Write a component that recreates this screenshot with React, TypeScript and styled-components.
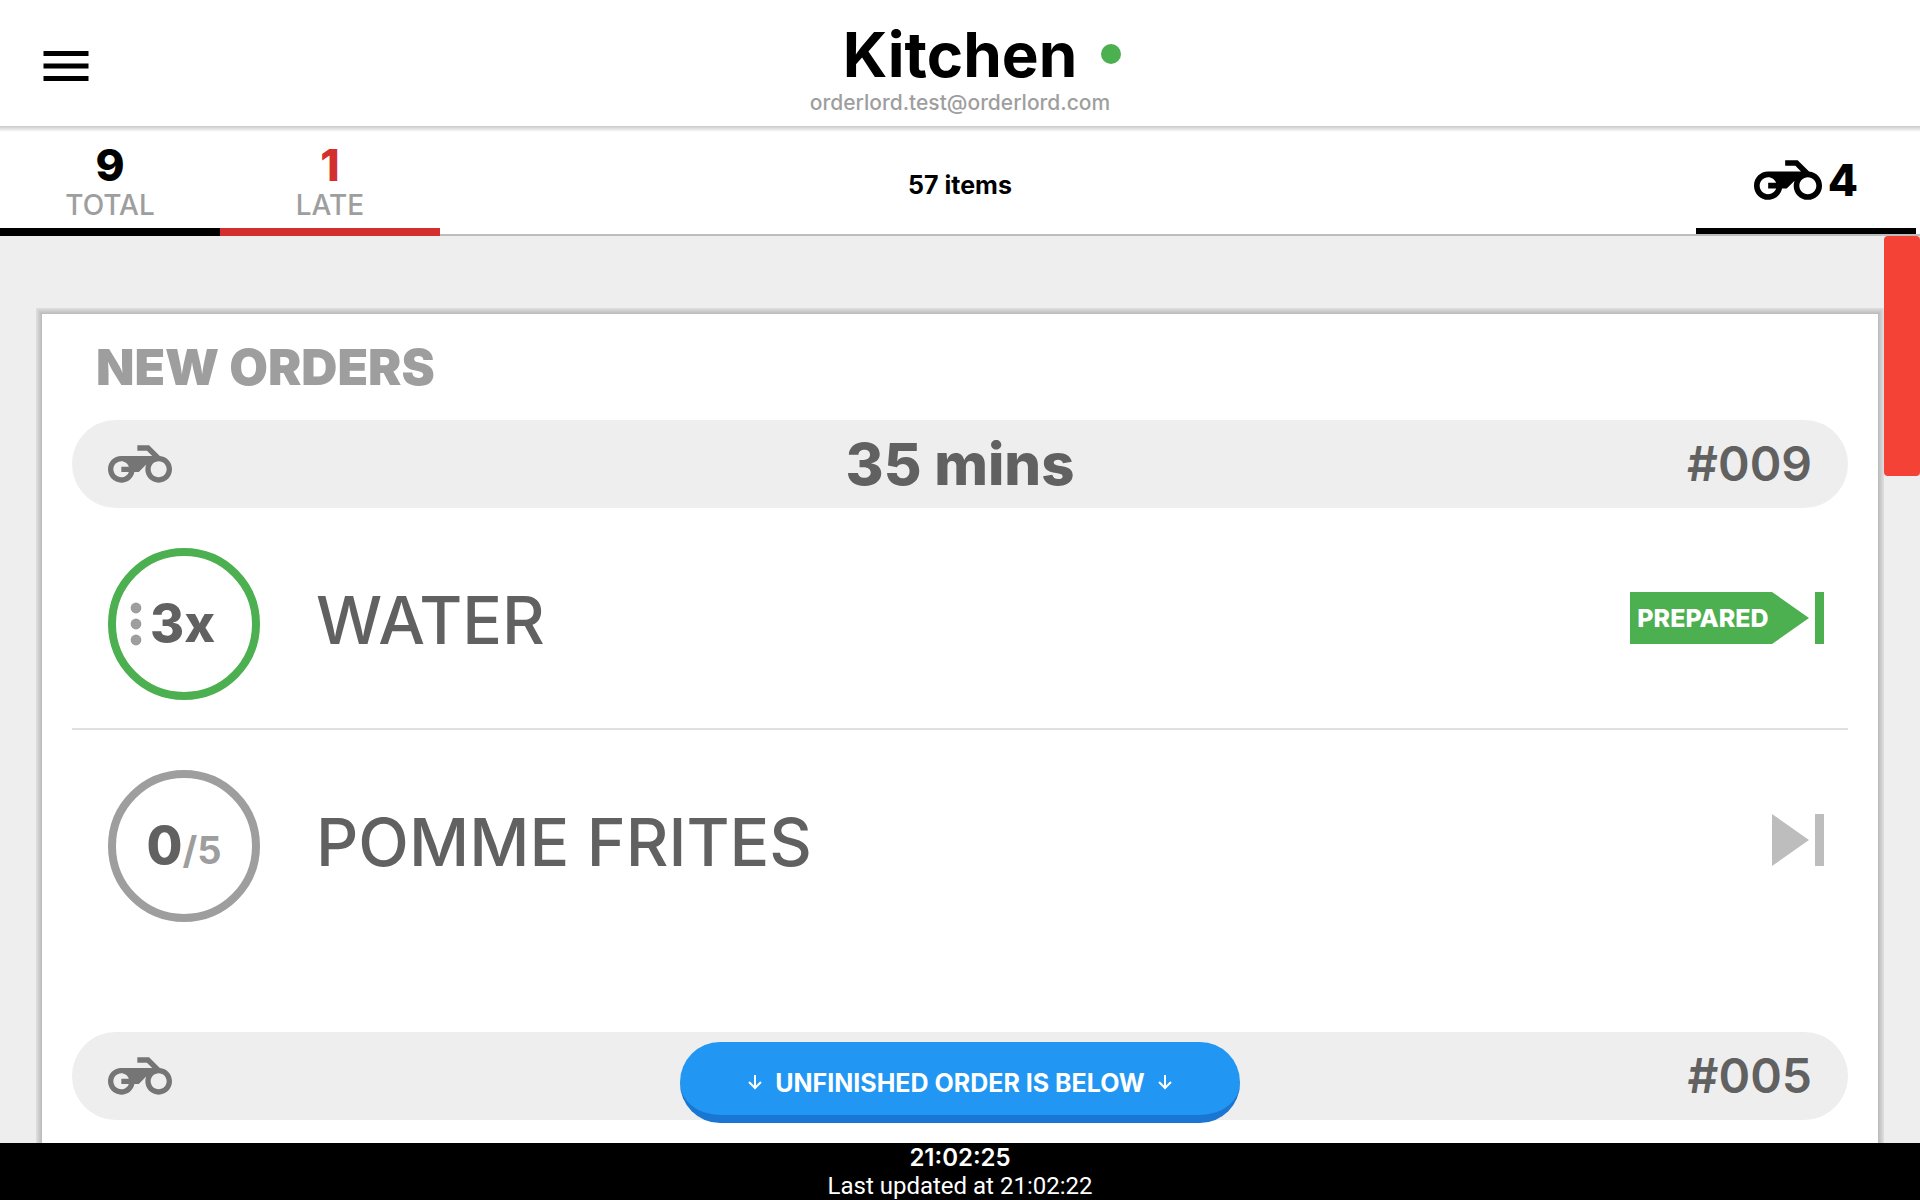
import React from "react";
import styled, { createGlobalStyle } from "styled-components";

const GlobalStyle = createGlobalStyle`
  * { box-sizing: border-box; }
  body { margin: 0; background: #eeeeee; }
  button {
    margin: 0;
    padding: 0;
    border: 0;
    background: none;
    color: inherit;
    font: inherit;
    cursor: pointer;
  }
  svg { display: block; flex: none; }
`;

const Screen = styled.div`
  display: flex;
  flex-direction: column;
  height: 100vh;
  overflow: hidden;
  font-family: Inter, "Liberation Sans", sans-serif;
  color: #000000;
`;

const Header = styled.header`
  display: grid;
  grid-template-columns: 1fr auto 1fr;
  align-items: start;
  padding: 21px 36px 9px;
  background: #ffffff;
`;

const MenuButton = styled.button`
  justify-self: start;
  margin-top: 15px;
`;

const Heading = styled.div`
  text-align: center;
`;

const Title = styled.h1`
  position: relative;
  width: max-content;
  margin: 0 auto;
  font-size: 62px;
  font-weight: 700;
  line-height: 68px;
`;

const OnlineDot = styled.span`
  position: absolute;
  top: 23px;
  left: 100%;
  width: 20px;
  height: 20px;
  margin-left: 24px;
  border-radius: 50%;
  background: #4caf50;
`;

const Account = styled.div`
  font-size: 21px;
  font-weight: 500;
  line-height: 28px;
  color: #9e9e9e;
`;

const Stats = styled.nav`
  display: grid;
  grid-template-columns: 1fr auto 1fr;
  background: linear-gradient(#c8c8c8, #ffffff 6px);
  box-shadow: inset 0 -2px #bdbdbd;
`;

const Tabs = styled.div`
  display: flex;
`;

const Tab = styled.button<{ $accent: string }>`
  width: 220px;
  padding: 17px 0 5px;
  border-bottom: 8px solid ${(p) => p.$accent};
  color: ${(p) => p.$accent};
`;

const TabCount = styled.div`
  font-size: 44px;
  font-weight: 800;
  line-height: 44px;
`;

const TabLabel = styled.div`
  font-size: 28px;
  font-weight: 500;
  line-height: 36px;
  color: #9e9e9e;
`;

const ItemCount = styled.div`
  align-self: center;
  padding-top: 8px;
  font-size: 25px;
  font-weight: 700;
  line-height: 32px;
`;

const DeliveryTab = styled.button`
  display: flex;
  align-items: center;
  justify-content: center;
  justify-self: end;
  gap: 6px;
  width: 220px;
  margin: 0 4px 2px 0;
  padding-top: 6px;
  border-bottom: 6px solid #000000;
  font-size: 44px;
  font-weight: 800;
  line-height: 44px;
`;

const Main = styled.main`
  position: relative;
  flex: 1;
  min-height: 0;
  padding: 78px 42px 0;
  overflow: hidden;
  background: #eeeeee;
`;

const ScrollThumb = styled.div`
  position: absolute;
  top: 0;
  right: 0;
  width: 36px;
  height: 240px;
  border-radius: 4px;
  background: #f44336;
`;

const Card = styled.section`
  min-height: 100%;
  padding: 0 30px 40px;
  background: #ffffff;
  box-shadow:
    0 0 0 1px #bdbdbd,
    0 0 0 2px #c3c3c3,
    0 0 0 3px #c9c9c9,
    0 0 0 4px #cfcfcf,
    0 0 0 5px #d6d6d6,
    0 0 0 6px #dddddd;
`;

const CardTitle = styled.h2`
  margin: 0;
  padding-left: 24px;
  font-size: 50px;
  font-weight: 900;
  line-height: 106px;
  color: #9e9e9e;
`;

const Order = styled.article`
  margin-bottom: 80px;
  color: #616161;
`;

const OrderBar = styled.header`
  display: grid;
  grid-template-columns: 1fr auto 1fr;
  align-items: center;
  height: 88px;
  padding: 0 36px;
  border-radius: 44px;
  background: #eeeeee;
`;

const OrderTime = styled.div`
  font-size: 58px;
  font-weight: 800;
  line-height: 88px;
`;

const OrderNumber = styled.div`
  justify-self: end;
  font-size: 48px;
  font-weight: 600;
  line-height: 88px;
`;

const Items = styled.ul`
  margin: 0;
  padding: 0;
  list-style: none;
`;

const Item = styled.li`
  display: flex;
  align-items: flex-start;
  padding: 40px 24px 28px 36px;
  border-bottom: 2px solid #e0e0e0;

  &:last-child {
    border-color: transparent;
  }
`;

const Quantity = styled.button<{ $done: boolean }>`
  display: flex;
  flex: none;
  align-items: center;
  justify-content: ${(p) => (p.$done ? "flex-start" : "center")};
  gap: 8px;
  width: 152px;
  height: 152px;
  padding: ${(p) => (p.$done ? "0 0 0 14px" : "0")};
  border: 8px solid ${(p) => (p.$done ? "#4caf50" : "#9e9e9e")};
  border-radius: 50%;
  font-size: 52px;
  font-weight: 800;
  line-height: 56px;
`;

const OutOf = styled.span`
  font-size: 38px;
  font-weight: 700;
  line-height: 38px;
  color: #9e9e9e;
`;

const ItemName = styled.h3`
  flex: 1;
  margin: 0 56px;
  font-size: 66px;
  font-weight: 500;
  line-height: 144px;
`;

const Advance = styled.button<{ $done: boolean }>`
  display: flex;
  align-items: center;
  height: 140px;
  color: ${(p) => (p.$done ? "#4caf50" : "#bdbdbd")};
`;

const AdvanceLabel = styled.span`
  width: 142px;
  padding-left: 4px;
  background: #4caf50;
  font-size: 25px;
  font-weight: 800;
  line-height: 52px;
  text-align: center;
  color: #ffffff;
`;

const BelowButton = styled.button`
  position: absolute;
  bottom: 20px;
  left: 50%;
  display: flex;
  align-items: center;
  justify-content: center;
  gap: 13px;
  width: 560px;
  height: 81px;
  margin-left: -280px;
  padding-top: 8px;
  border-bottom: 8px solid #1976d2;
  border-radius: 40px;
  background: #2196f3;
  font-size: 25px;
  font-weight: 700;
  line-height: 32px;
  color: #ffffff;
`;

const Footer = styled.footer`
  padding-top: 1px;
  background: #000000;
  text-align: center;
  color: #ffffff;
`;

const Clock = styled.div`
  font-size: 24px;
  font-weight: 600;
  line-height: 28px;
`;

const Updated = styled.div`
  font-family: Roboto, "Liberation Sans", sans-serif;
  font-size: 24px;
  line-height: 28px;
`;

const MenuIcon = () => (
  <svg width="60" height="60" viewBox="0 0 24 24" fill="currentColor" aria-hidden="true">
    <path d="M3 18h18v-2H3v2zm0-5h18v-2H3v2zm0-7v2h18V6H3z" />
  </svg>
);

const BikeIcon = ({ size, color }: { size: number; color: string }) => (
  <svg width={size} height={size} viewBox="0 0 24 24" fill={color} aria-hidden="true">
    <path d="M19.44 9.03L15.41 5H11v2h3.59l2 2H5c-2.8 0-5 2.2-5 5s2.2 5 5 5c2.46 0 4.45-1.69 4.9-4h1.65l2.77-2.77c-.21.54-.32 1.14-.32 1.77 0 2.8 2.2 5 5 5s5-2.2 5-5c0-2.65-1.97-4.77-4.56-4.97zM7.82 15C7.4 16.15 6.28 17 5 17c-1.63 0-3-1.37-3-3s1.37-3 3-3c1.28 0 2.4.85 2.82 2H5v2h2.82zM19 17c-1.66 0-3-1.34-3-3s1.34-3 3-3 3 1.34 3 3-1.34 3-3 3z" />
  </svg>
);

const DotsIcon = () => (
  <svg width="12" height="44" viewBox="0 0 12 44" fill="#9e9e9e" aria-hidden="true">
    <circle cx="6" cy="6" r="5.4" />
    <circle cx="6" cy="22" r="5.4" />
    <circle cx="6" cy="38" r="5.4" />
  </svg>
);

const NextIcon = () => (
  <svg width="52" height="52" viewBox="0 0 52 52" fill="currentColor" aria-hidden="true">
    <path d="M0 0L37 26L0 52zM43 0h9v52h-9z" />
  </svg>
);

const ArrowIcon = () => (
  <svg width="14" height="16" viewBox="0 0 14 16" fill="none" stroke="currentColor" strokeWidth="2" aria-hidden="true">
    <path d="M7 0v14M1 7l6 6l6-6" />
  </svg>
);

type OrderItem = { name: string; ready: number; total: number };
type OrderData = { number: string; time?: string; items: OrderItem[] };

const orders: OrderData[] = [
  {
    number: "#009",
    time: "35 mins",
    items: [
      { name: "WATER", ready: 3, total: 3 },
      { name: "POMME FRITES", ready: 0, total: 5 },
    ],
  },
  { number: "#005", items: [] },
];

const ItemRow = ({ name, ready, total }: OrderItem) => {
  const done = ready === total;
  return (
    <Item>
      <Quantity $done={done}>
        {done ? (
          <>
            <DotsIcon />
            <span>{total}x</span>
          </>
        ) : (
          <span>
            {ready}
            <OutOf>/{total}</OutOf>
          </span>
        )}
      </Quantity>
      <ItemName>{name}</ItemName>
      <Advance $done={done} aria-label={done ? undefined : "Mark as prepared"}>
        {done && <AdvanceLabel>PREPARED</AdvanceLabel>}
        <NextIcon />
      </Advance>
    </Item>
  );
};

export default function App() {
  return (
    <Screen>
      <GlobalStyle />
      <Header>
        <MenuButton aria-label="Menu">
          <MenuIcon />
        </MenuButton>
        <Heading>
          <Title>
            Kitchen
            <OnlineDot />
          </Title>
          <Account>orderlord.test@orderlord.com</Account>
        </Heading>
      </Header>
      <Stats>
        <Tabs>
          <Tab $accent="#000000">
            <TabCount>9</TabCount>
            <TabLabel>TOTAL</TabLabel>
          </Tab>
          <Tab $accent="#d32f2f">
            <TabCount>1</TabCount>
            <TabLabel>LATE</TabLabel>
          </Tab>
        </Tabs>
        <ItemCount>57 items</ItemCount>
        <DeliveryTab>
          <BikeIcon size={68} color="#000000" />
          <span>4</span>
        </DeliveryTab>
      </Stats>
      <Main>
        <Card>
          <CardTitle>NEW ORDERS</CardTitle>
          {orders.map((order) => (
            <Order key={order.number}>
              <OrderBar>
                <BikeIcon size={64} color="#757575" />
                <OrderTime>{order.time}</OrderTime>
                <OrderNumber>{order.number}</OrderNumber>
              </OrderBar>
              <Items>
                {order.items.map((item) => (
                  <ItemRow key={item.name} {...item} />
                ))}
              </Items>
            </Order>
          ))}
        </Card>
        <ScrollThumb />
        <BelowButton>
          <ArrowIcon />
          <span>UNFINISHED ORDER IS BELOW</span>
          <ArrowIcon />
        </BelowButton>
      </Main>
      <Footer>
        <Clock>21:02:25</Clock>
        <Updated>Last updated at 21:02:22</Updated>
      </Footer>
    </Screen>
  );
}
